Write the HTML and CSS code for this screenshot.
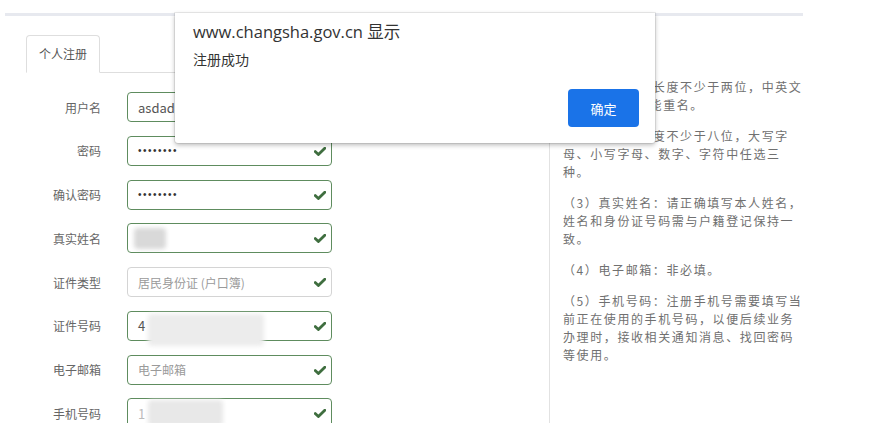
FILE: index.html
```html
<!DOCTYPE html>
<html lang="zh-CN">
<head>
<meta charset="utf-8">
<title>个人注册</title>
<link rel="stylesheet" href="styles.css">
</head>
<body>
<div class="page">
  <div class="topbar"></div>
  <div class="main">
    <div class="left">
      <div class="tabs">
        <div class="tab">个人注册</div>
        <div class="tab-fill"></div>
      </div>
      <div class="form">
        <div class="row">
          <span class="lbl">用户名</span>
          <div class="field ok"><span class="val">asdad1234</span>
            <svg class="check" viewBox="0 0 12 9"><path d="M1.2 4.6 L4.4 7.6 L10.8 1.2"/></svg></div>
        </div>
        <div class="row">
          <span class="lbl">密码</span>
          <div class="field ok"><span class="dots">••••••••</span>
            <svg class="check" viewBox="0 0 12 9"><path d="M1.2 4.6 L4.4 7.6 L10.8 1.2"/></svg></div>
        </div>
        <div class="row">
          <span class="lbl">确认密码</span>
          <div class="field ok"><span class="dots">••••••••</span>
            <svg class="check" viewBox="0 0 12 9"><path d="M1.2 4.6 L4.4 7.6 L10.8 1.2"/></svg></div>
        </div>
        <div class="row">
          <span class="lbl">真实姓名</span>
          <div class="field ok"><span class="blur blur-name"></span>
            <svg class="check" viewBox="0 0 12 9"><path d="M1.2 4.6 L4.4 7.6 L10.8 1.2"/></svg></div>
        </div>
        <div class="row">
          <span class="lbl">证件类型</span>
          <div class="field plain"><span class="ph">居民身份证 (户口簿)</span>
            <svg class="check" viewBox="0 0 12 9"><path d="M1.2 4.6 L4.4 7.6 L10.8 1.2"/></svg></div>
        </div>
        <div class="row">
          <span class="lbl">证件号码</span>
          <div class="field ok"><span class="val">4</span><span class="blur blur-id"></span>
            <svg class="check" viewBox="0 0 12 9"><path d="M1.2 4.6 L4.4 7.6 L10.8 1.2"/></svg></div>
        </div>
        <div class="row">
          <span class="lbl">电子邮箱</span>
          <div class="field ok"><span class="ph">电子邮箱</span>
            <svg class="check" viewBox="0 0 12 9"><path d="M1.2 4.6 L4.4 7.6 L10.8 1.2"/></svg></div>
        </div>
        <div class="row">
          <span class="lbl">手机号码</span>
          <div class="field ok"><span class="val faint">1</span><span class="blur blur-phone"></span>
            <svg class="check" viewBox="0 0 12 9"><path d="M1.2 4.6 L4.4 7.6 L10.8 1.2"/></svg></div>
        </div>
      </div>
    </div>
    <div class="help">
      <p>（1）用户名：长度不少于两位，中英文<br>、数字均可,不能重名。</p>
      <p>（2）密码：长度不少于八位，大写字<br>母、小写字母、数字、字符中任选三<br>种。</p>
      <p>（3）真实姓名：请正确填写本人姓名，<br>姓名和身份证号码需与户籍登记保持一<br>致。</p>
      <p>（4）电子邮箱：非必填。</p>
      <p>（5）手机号码：注册手机号需要填写当<br>前正在使用的手机号码，以便后续业务<br>办理时，接收相关通知消息、找回密码<br>等使用。</p>
    </div>
  </div>
  <div class="dialog">
    <div class="dlg-title">www.changsha.gov.cn 显示</div>
    <div class="dlg-msg">注册成功</div>
    <div class="dlg-actions"><button class="dlg-btn">确定</button></div>
  </div>
</div>
</body>
</html>
```

FILE: styles.css
```css
* { box-sizing: border-box; }
html, body { margin: 0; padding: 0; background: #fff; }
body {
  font-family: "Noto Sans CJK SC", "Noto Sans", sans-serif;
  color: #555;
}
.page {
  position: relative;
  width: 876px;
  height: 423px;
  overflow: hidden;
}
.topbar {
  margin: 13px 0 0 5px;
  width: 798px;
  height: 3px;
  background: #e7e9ef;
}
.main {
  display: flex;
  margin-left: 5px;
  height: 407px;
}
.left {
  width: 545px;
  border-right: 1px solid #e2e2e2;
}
.tabs {
  display: flex;
  align-items: flex-end;
  margin-top: 19px;
  padding-left: 21px;
}
.tab {
  width: 74px;
  height: 38px;
  border: 1px solid #dedede;
  border-bottom-color: transparent;
  border-radius: 4px 4px 0 0;
  font-size: 12px;
  line-height: 36px;
  text-align: center;
  color: #555;
}
.tab-fill {
  flex: 1;
  border-bottom: 1px solid #dedede;
}
.form {
  padding-top: 19px;
}
.row {
  display: flex;
  align-items: center;
  height: 30px;
  margin-bottom: 13.75px;
}
.lbl {
  width: 96px;
  margin-right: 26px;
  text-align: right;
  font-size: 12px;
  color: #666;
}
.field {
  position: relative;
  display: flex;
  align-items: center;
  width: 205px;
  height: 30px;
  padding-left: 10px;
  border: 1px solid #5e8c5e;
  border-radius: 4px;
  font-size: 12px;
}
.field.plain { border-color: #d4d4d4; }
.val { color: #555; font-size: 13px; }
.val.faint { color: #bbb; }
.ph { color: #9a9a9a; }
.dots {
  font-family: "Liberation Sans", sans-serif;
  font-size: 10px;
  letter-spacing: 1.5px;
  color: #333;
}
.check {
  position: absolute;
  right: 5px;
  top: 10px;
  width: 12px;
  height: 9px;
  fill: none;
  stroke: #3f6e3f;
  stroke-width: 2.8;
  stroke-linecap: round;
  stroke-linejoin: round;
}
.blur {
  position: absolute;
  background: #e2e2e2;
  filter: blur(2px);
  border-radius: 4px;
}
.blur-name { left: 6px; top: 4px; width: 32px; height: 21px; background: #d9d9d9; }
.blur-id { left: 20px; top: 2px; width: 116px; height: 32px; background: #ececec; }
.blur-phone { left: 20px; top: 1px; width: 75px; height: 26px; background: #e8e8e8; }
.help {
  padding: 62px 0 0 13px;
  font-size: 12px;
  line-height: 18px;
  letter-spacing: 1.6px;
  color: #707070;
}
.help p { margin: 0 0 13px; }
.dialog {
  position: absolute;
  left: 175px;
  top: 13px;
  width: 480px;
  height: 130px;
  display: flex;
  flex-direction: column;
  background: #fff;
  border-radius: 0 0 3px 3px;
  box-shadow: 0 0 0 1px rgba(0,0,0,0.07), 0 2px 5px rgba(0,0,0,0.28);
}
.dlg-title {
  padding: 7px 18px 0;
  font-family: "Open Sans", "Noto Sans CJK SC", sans-serif;
  font-size: 16.5px;
  line-height: 23px;
  color: #333;
}
.dlg-msg {
  padding: 6px 18px 0;
  font-size: 14px;
  line-height: 20px;
  color: #333;
}
.dlg-actions {
  margin-top: auto;
  display: flex;
  justify-content: flex-end;
  padding: 0 16px 16px;
}
.dlg-btn {
  width: 71px;
  height: 38px;
  border: none;
  border-radius: 4px;
  background: #1a73e8;
  color: #fff;
  font-family: "Noto Sans CJK SC", sans-serif;
  font-size: 13px;
}
```
